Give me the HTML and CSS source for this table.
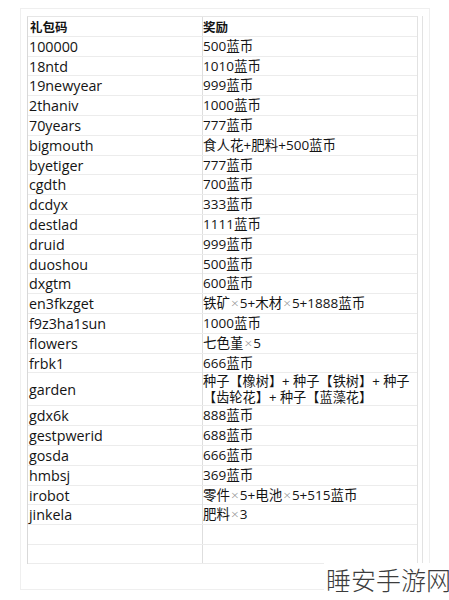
FILE: index.html
```html
<!DOCTYPE html>
<html lang="zh">
<head>
<meta charset="utf-8">
<title>礼包码</title>
<link rel="stylesheet" href="styles.css">
</head>
<body>
<div class="page">
  <div class="sheet">
    <div class="frame">
      <div class="table">
        <div class="row head"><div class="c1">礼包码</div><div class="c2">奖励</div></div>
        <div class="row"><div class="c1">100000</div><div class="c2">500蓝币</div></div>
        <div class="row"><div class="c1">18ntd</div><div class="c2">1010蓝币</div></div>
        <div class="row"><div class="c1">19newyear</div><div class="c2">999蓝币</div></div>
        <div class="row"><div class="c1">2thaniv</div><div class="c2">1000蓝币</div></div>
        <div class="row"><div class="c1">70years</div><div class="c2">777蓝币</div></div>
        <div class="row"><div class="c1">bigmouth</div><div class="c2">食人花+肥料+500蓝币</div></div>
        <div class="row"><div class="c1">byetiger</div><div class="c2">777蓝币</div></div>
        <div class="row"><div class="c1">cgdth</div><div class="c2">700蓝币</div></div>
        <div class="row"><div class="c1">dcdyx</div><div class="c2">333蓝币</div></div>
        <div class="row"><div class="c1">destlad</div><div class="c2">1111蓝币</div></div>
        <div class="row"><div class="c1">druid</div><div class="c2">999蓝币</div></div>
        <div class="row"><div class="c1">duoshou</div><div class="c2">500蓝币</div></div>
        <div class="row"><div class="c1">dxgtm</div><div class="c2">600蓝币</div></div>
        <div class="row"><div class="c1">en3fkzget</div><div class="c2">铁矿<span class="x">×</span>5+木材<span class="x">×</span>5+1888蓝币</div></div>
        <div class="row"><div class="c1">f9z3ha1sun</div><div class="c2">1000蓝币</div></div>
        <div class="row"><div class="c1">flowers</div><div class="c2">七色堇<span class="x">×</span>5</div></div>
        <div class="row"><div class="c1">frbk1</div><div class="c2">666蓝币</div></div>
        <div class="row tall"><div class="c1">garden</div><div class="c2 wrap"><span class="ln">种子【橡树】+ 种子【铁树】+ 种子</span><span class="ln">【齿轮花】+ 种子【蓝藻花】</span></div></div>
        <div class="row"><div class="c1">gdx6k</div><div class="c2">888蓝币</div></div>
        <div class="row"><div class="c1">gestpwerid</div><div class="c2">688蓝币</div></div>
        <div class="row"><div class="c1">gosda</div><div class="c2">666蓝币</div></div>
        <div class="row"><div class="c1">hmbsj</div><div class="c2">369蓝币</div></div>
        <div class="row"><div class="c1">irobot</div><div class="c2">零件<span class="x">×</span>5+电池<span class="x">×</span>5+515蓝币</div></div>
        <div class="row"><div class="c1">jinkela</div><div class="c2">肥料<span class="x">×</span>3</div></div>
        <div class="row empty"><div class="c1"></div><div class="c2"></div></div>
        <div class="row empty"><div class="c1"></div><div class="c2"></div></div>
      </div>
    </div>
  </div>
  <div class="watermark">睡安手游网</div>
</div>
</body>
</html>
```

FILE: styles.css
```css
html, body {
  margin: 0;
  padding: 0;
  background: #fff;
}
body {
  overflow: hidden;
  font-family: "Open Sans", "Noto Sans CJK SC", sans-serif;
  color: #141414;
}
.page {
  position: relative;
  width: 449px;
  height: 600px;
  overflow: hidden;
}
.sheet {
  margin: 8px 0 0 20px;
  width: 402px;
  height: 573px;
  padding: 7px 0 0 6px;
  border: 1px solid #efefef;
}
.frame {
  width: 395px;
  border-right: 1px solid #e2e2e2;
}
.table {
  width: 389px;
  border-top: 1px solid #e6e6e6;
  border-left: 1px solid #d9d9d9;
  border-right: 1px solid #e2e2e2;
}
.row {
  display: grid;
  grid-template-columns: 175px 1fr;
  height: 19.8px;
  box-sizing: border-box;
  border-bottom: 1px solid #ececec;
}
.row.tall {
  height: 33px;
}
.c1 {
  border-right: 1px solid #dedede;
  padding-left: 1px;
  font-size: 14.3px;
  line-height: 19px;
  white-space: nowrap;
  display: flex;
  align-items: center;
}
.c2 {
  padding-left: 0;
  font-size: 13.5px;
  line-height: 19px;
  white-space: nowrap;
  display: flex;
  align-items: center;
}
.c2.wrap {
  flex-direction: column;
  align-items: flex-start;
  justify-content: center;
  font-size: 13.2px;
  line-height: 16px;
}
.ln {
  display: block;
  height: 16px;
  overflow: visible;
}
.head .c1,
.head .c2 {
  font-family: "Noto Sans CJK SC", sans-serif;
  font-weight: 700;
  font-size: 12.5px;
}
.head .c1 {
  padding-left: 2px;
}
.x {
  color: #8a8a8a;
  font-weight: 300;
  padding: 0 1px;
}
.empty {
  height: 19.5px;
}
.watermark {
  position: absolute;
  left: 324px;
  top: 563px;
  padding: 0 0 4px 2px;
  background: #fff;
  font-family: "Noto Sans CJK SC", sans-serif;
  font-weight: 300;
  font-size: 25px;
  line-height: 33px;
  color: #3c3c3c;
  white-space: nowrap;
}
```
